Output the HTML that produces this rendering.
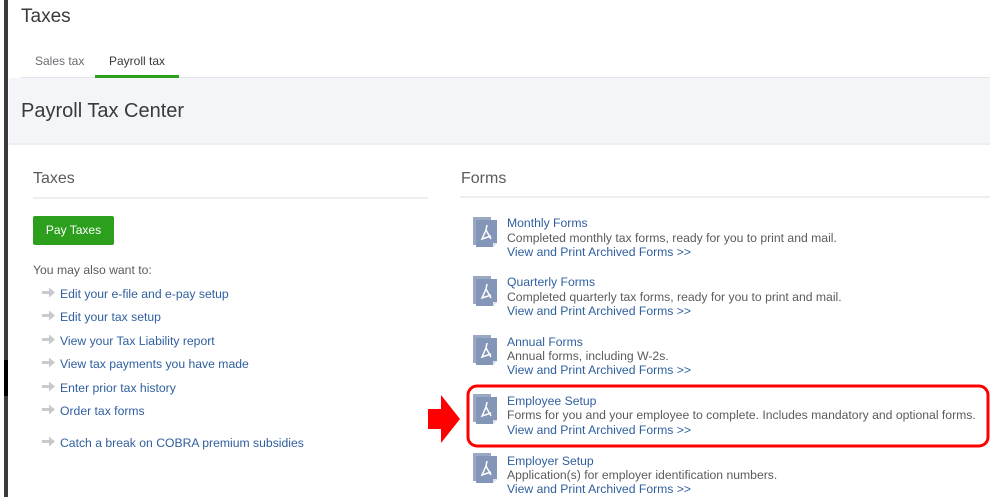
<!DOCTYPE html>
<html><head><style>
*{margin:0;padding:0;box-sizing:border-box}
body{width:999px;height:497px;background:#fff;font-family:"Liberation Sans",sans-serif;position:relative;overflow:hidden;color:#393a3d}
.a{position:absolute;white-space:nowrap}
.lk{color:#2f5f9e;font-size:12.2px}
.gr{color:#5a5b5e;font-size:12.2px}
</style></head><body>
<div class="a" style="left:4px;top:0;width:4px;height:497px;background:#3a3a3a"></div>
<div class="a" style="left:4px;top:360px;width:4px;height:36px;background:#000"></div>
<div class="a" style="left:21px;top:6px;font-size:19px;color:#393a3d">Taxes</div>
<div class="a" style="left:35px;top:54px;font-size:12px;color:#6b6c72">Sales tax</div>
<div class="a" style="left:109px;top:54px;font-size:12px;color:#393a3d">Payroll tax</div>
<div class="a" style="left:21px;top:77px;width:969px;height:1px;background:#e3e5e8"></div>
<div class="a" style="left:95px;top:75px;width:84px;height:3px;background:#2ca01c"></div>
<div class="a" style="left:9px;top:78px;width:981px;height:67px;background:#f4f5f8;border-bottom:2px solid #eceef1"></div>
<div class="a" style="left:21px;top:100px;font-size:20px;color:#393a3d">Payroll Tax Center</div>
<div class="a" style="left:33px;top:170px;font-size:16px;color:#5a5b5e">Taxes</div>
<div class="a" style="left:33px;top:197px;width:395px;height:2px;background:#eceef1"></div>
<div class="a" style="left:461px;top:170px;font-size:16px;color:#5a5b5e">Forms</div>
<div class="a" style="left:460px;top:196px;width:530px;height:2px;background:#eceef1"></div>
<div class="a" style="left:33px;top:216px;width:81px;height:29px;background:#2ca01c;border-radius:2px;color:#fff;font-size:12px;line-height:29px;text-align:center">Pay Taxes</div>
<div class="a gr" style="left:33px;top:263px">You may also want to:</div>
<svg class="a" style="left:0;top:0" width="999" height="497">
<g fill="#c8c9cc">
<path d="M42 291h7v-3.5l6 5-6 5v-3.5h-7z"/>
<path d="M42 314h7v-3.5l6 5-6 5v-3.5h-7z"/>
<path d="M42 338h7v-3.5l6 5-6 5v-3.5h-7z"/>
<path d="M42 361h7v-3.5l6 5-6 5v-3.5h-7z"/>
<path d="M42 385h7v-3.5l6 5-6 5v-3.5h-7z"/>
<path d="M42 408h7v-3.5l6 5-6 5v-3.5h-7z"/>
<path d="M42 440h7v-3.5l6 5-6 5v-3.5h-7z"/>
</g>
<g id="ic">
<path d="M473 217h18v3h-15v25h-3z" fill="#9aa8c4"/>
<path d="M476 220h21v23l-4 4h-17z" fill="#8496b8"/>
<path d="M493 247v-4h4z" fill="#dde3ee"/>
<path d="M487 225l-1 5 5 9M486 230l-4 9 9-3" stroke="#fff" stroke-width="1.5" fill="none"/>
</g>
<use href="#ic" y="59"/><use href="#ic" y="118"/><use href="#ic" y="177"/><use href="#ic" y="236"/>
<rect x="468" y="386" width="520" height="60" rx="9" fill="none" stroke="#f00" stroke-width="3"/>
<path d="M428 409h13v-14l19 24-19 24v-14h-13z" fill="#f00"/>
</svg>
<div class="a lk" style="left:60px;top:287px">Edit your e-file and e-pay setup</div>
<div class="a lk" style="left:60px;top:310px">Edit your tax setup</div>
<div class="a lk" style="left:60px;top:334px">View your Tax Liability report</div>
<div class="a lk" style="left:60px;top:357px">View tax payments you have made</div>
<div class="a lk" style="left:60px;top:381px">Enter prior tax history</div>
<div class="a lk" style="left:60px;top:404px">Order tax forms</div>
<div class="a lk" style="left:60px;top:436px">Catch a break on COBRA premium subsidies</div>

<div class="a lk" style="left:507px;top:216px">Monthly Forms</div>
<div class="a gr" style="left:507px;top:231px">Completed monthly tax forms, ready for you to print and mail.</div>
<div class="a lk" style="left:507px;top:245px">View and Print Archived Forms &gt;&gt;</div>
<div class="a lk" style="left:507px;top:275px">Quarterly Forms</div>
<div class="a gr" style="left:507px;top:290px">Completed quarterly tax forms, ready for you to print and mail.</div>
<div class="a lk" style="left:507px;top:304px">View and Print Archived Forms &gt;&gt;</div>
<div class="a lk" style="left:507px;top:335px">Annual Forms</div>
<div class="a gr" style="left:507px;top:349px">Annual forms, including W-2s.</div>
<div class="a lk" style="left:507px;top:363px">View and Print Archived Forms &gt;&gt;</div>
<div class="a lk" style="left:507px;top:394px">Employee Setup</div>
<div class="a gr" style="left:507px;top:408px">Forms for you and your employee to complete. Includes mandatory and optional forms.</div>
<div class="a lk" style="left:507px;top:423px">View and Print Archived Forms &gt;&gt;</div>
<div class="a lk" style="left:507px;top:454px">Employer Setup</div>
<div class="a gr" style="left:507px;top:468px">Application(s) for employer identification numbers.</div>
<div class="a lk" style="left:507px;top:482px">View and Print Archived Forms &gt;&gt;</div>
</body></html>
